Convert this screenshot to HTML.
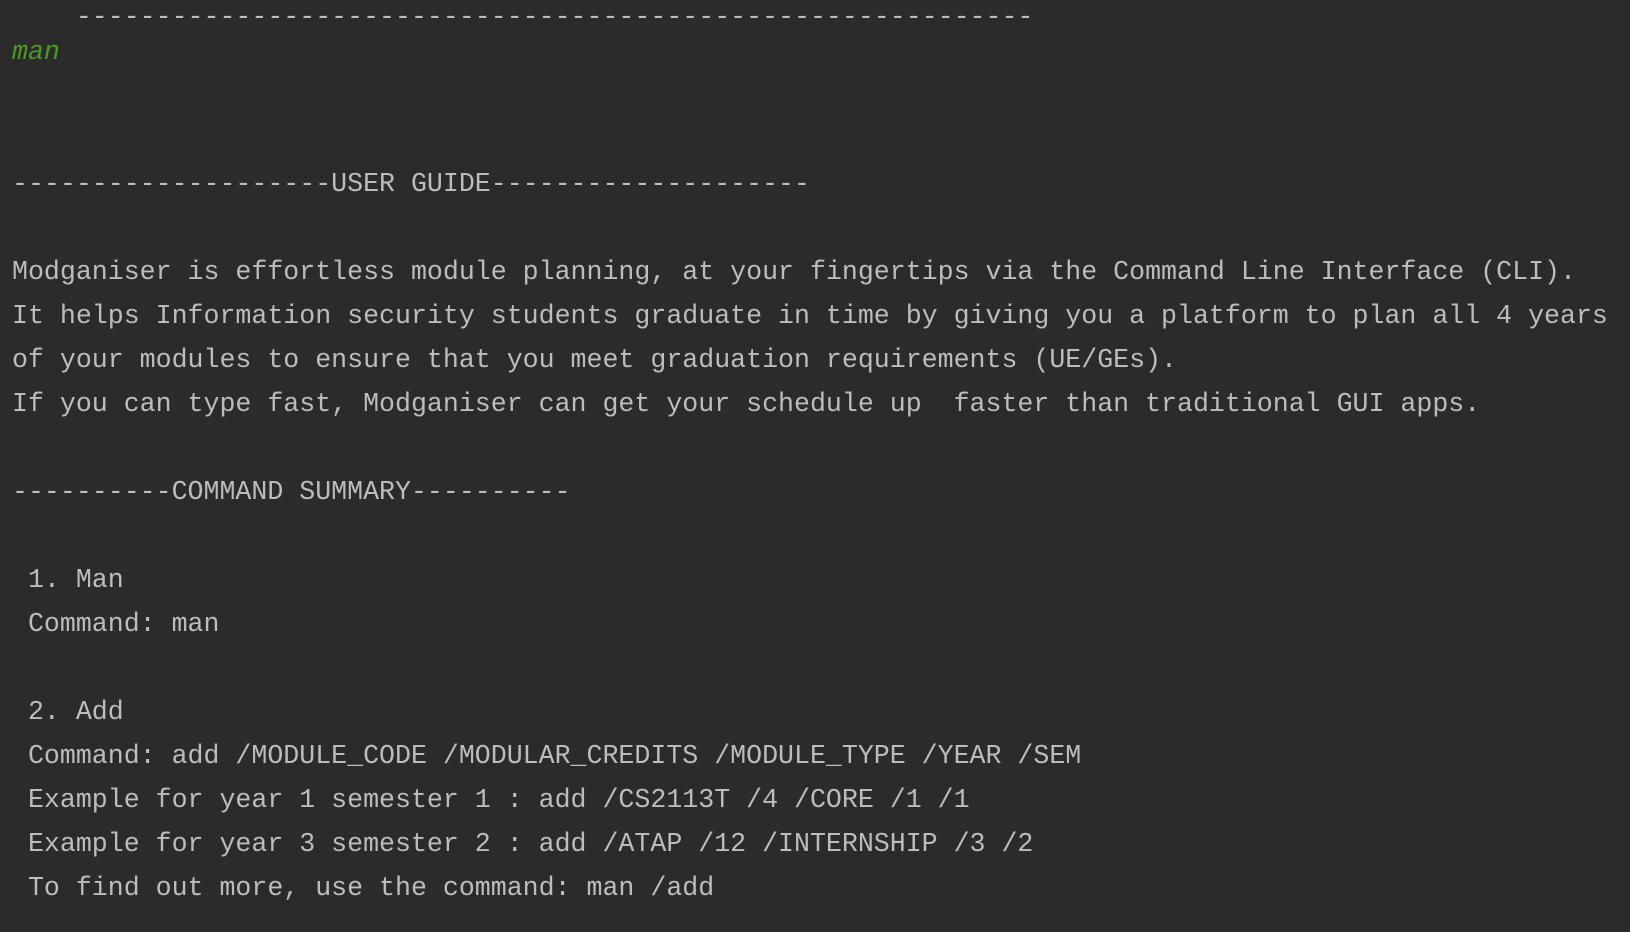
<!DOCTYPE html>
<html><head><meta charset="utf-8"><style>
html,body{margin:0;padding:0;background:#2b2b2b;width:1630px;height:932px;overflow:hidden}
pre{margin:-12.5px 0 0 12px;font-family:"Liberation Mono",monospace;font-size:26.6px;line-height:43.98px;color:#bcbcbc;white-space:pre}
.g{color:#4a9a26;font-style:italic}
.d{position:relative;top:8px}
</style></head><body><pre><span class="d">    ------------------------------------------------------------</span>
<span class="g">man</span>


--------------------USER GUIDE--------------------

Modganiser is effortless module planning, at your fingertips via the Command Line Interface (CLI).
It helps Information security students graduate in time by giving you a platform to plan all 4 years
of your modules to ensure that you meet graduation requirements (UE/GEs).
If you can type fast, Modganiser can get your schedule up  faster than traditional GUI apps.

----------COMMAND SUMMARY----------

 1. Man
 Command: man

 2. Add
 Command: add /MODULE_CODE /MODULAR_CREDITS /MODULE_TYPE /YEAR /SEM
 Example for year 1 semester 1 : add /CS2113T /4 /CORE /1 /1
 Example for year 3 semester 2 : add /ATAP /12 /INTERNSHIP /3 /2
 To find out more, use the command: man /add
</pre></body></html>
